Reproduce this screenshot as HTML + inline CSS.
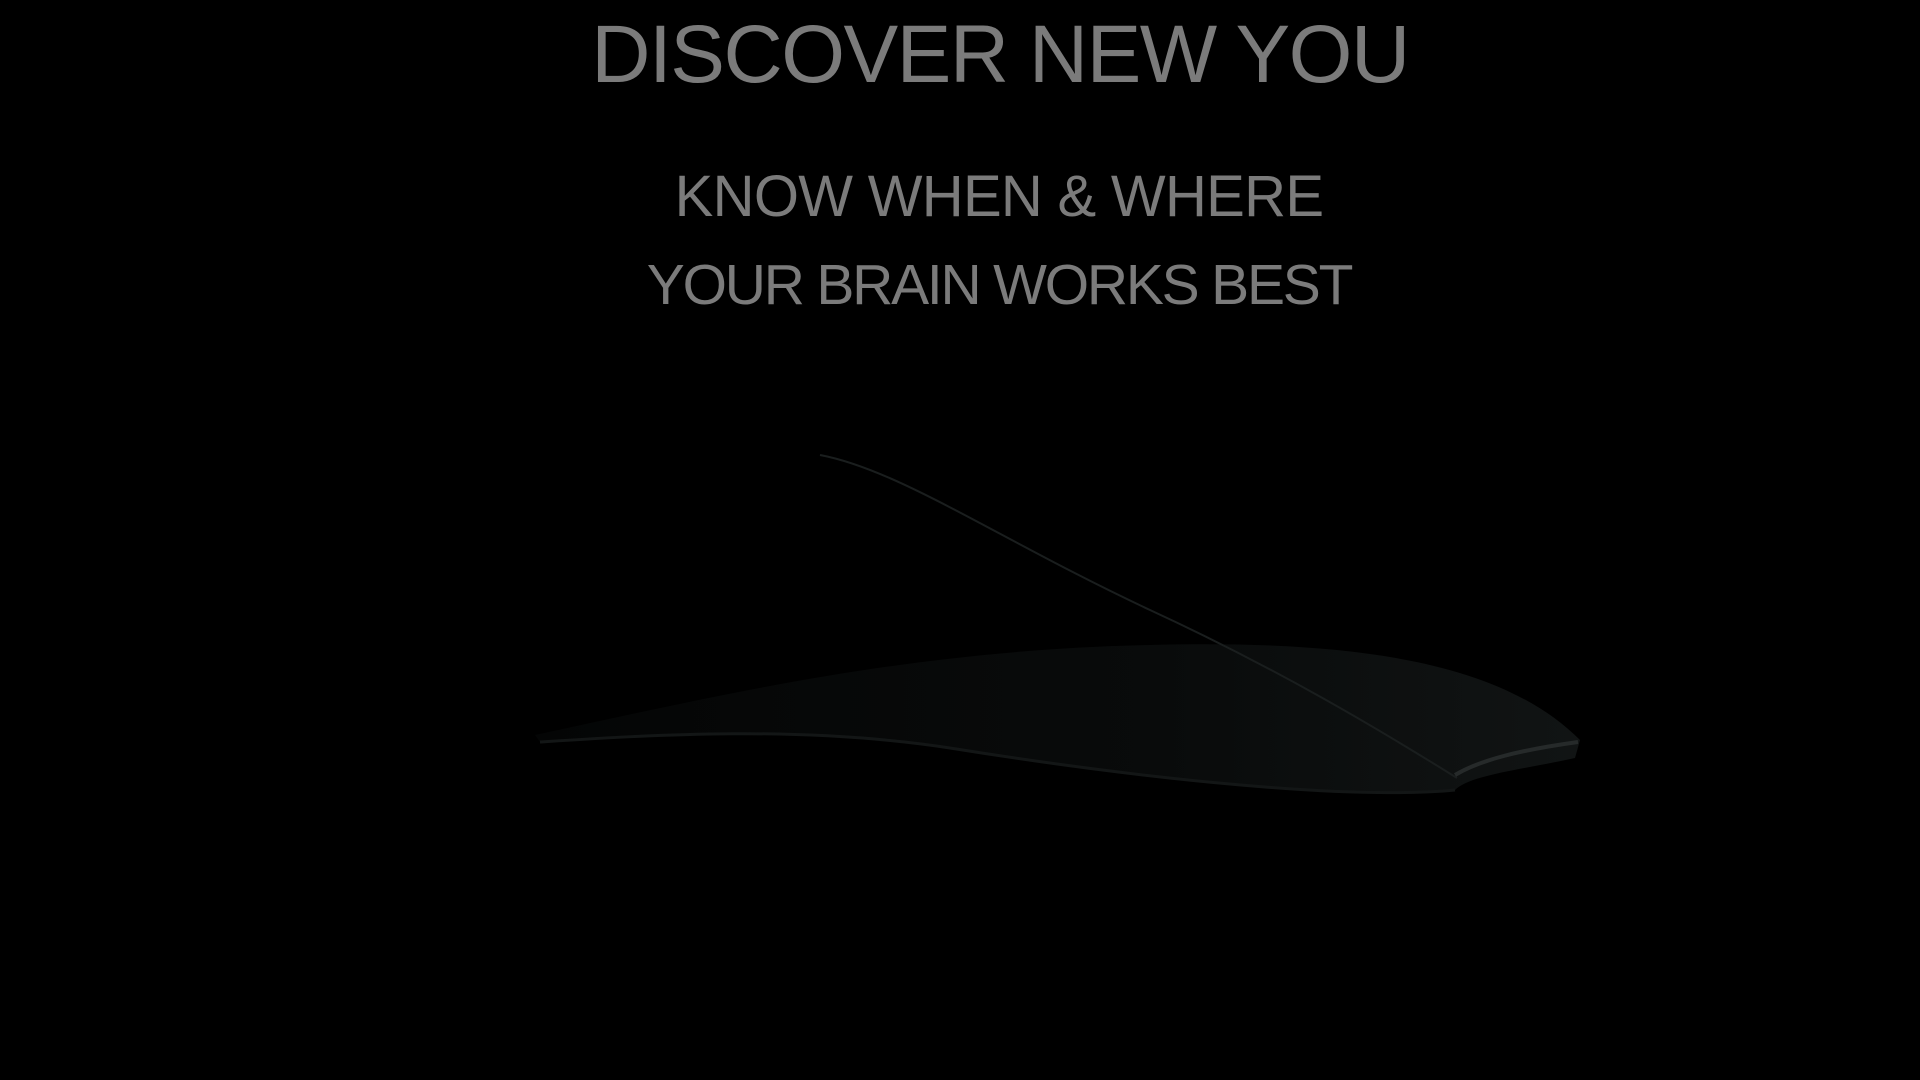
<!DOCTYPE html>
<html><head><meta charset="utf-8"><style>
html,body{margin:0;padding:0;background:#000;width:1920px;height:1080px;overflow:hidden}
.t{position:absolute;left:0;width:1920px;text-align:center;color:#7b7b7b;font-family:"Liberation Sans",sans-serif;white-space:nowrap}
#a{top:8px;font-size:82px;left:40px;letter-spacing:-1.5px}
#b{top:163px;font-size:58px;left:39px;letter-spacing:-0.7px}
#c{top:252px;font-size:57px;left:39px;letter-spacing:-2.2px}
svg{position:absolute;left:0;top:0}
</style></head><body>
<svg width="1920" height="1080" viewBox="0 0 1920 1080">
<defs><linearGradient id="g" x1="0" x2="1"><stop offset="0" stop-color="#040505"/><stop offset="0.6" stop-color="#090b0b"/><stop offset="1" stop-color="#111414"/></linearGradient></defs>
<path d="M535 735 C700 700 900 650 1150 645 C1350 640 1500 660 1580 740 L1575 758 C1520 770 1470 775 1455 790 C1300 800 1100 770 900 740 C750 725 620 740 540 742 Z" fill="url(#g)"/>
<path d="M540 742 C650 735 800 725 950 748 C1150 780 1350 800 1455 790" stroke="#131616" stroke-width="3" fill="none"/>
<path d="M820 455 C900 470 1000 540 1150 610 C1280 670 1380 730 1457 778" stroke="#1a1e1e" stroke-width="2" fill="none"/>
<path d="M1455 775 C1480 760 1520 750 1578 742" stroke="#262a2a" stroke-width="4" fill="none"/>
</svg>
<div class="t" id="a">DISCOVER NEW YOU</div>
<div class="t" id="b">KNOW WHEN &amp; WHERE</div>
<div class="t" id="c">YOUR BRAIN WORKS BEST</div>
</body></html>
